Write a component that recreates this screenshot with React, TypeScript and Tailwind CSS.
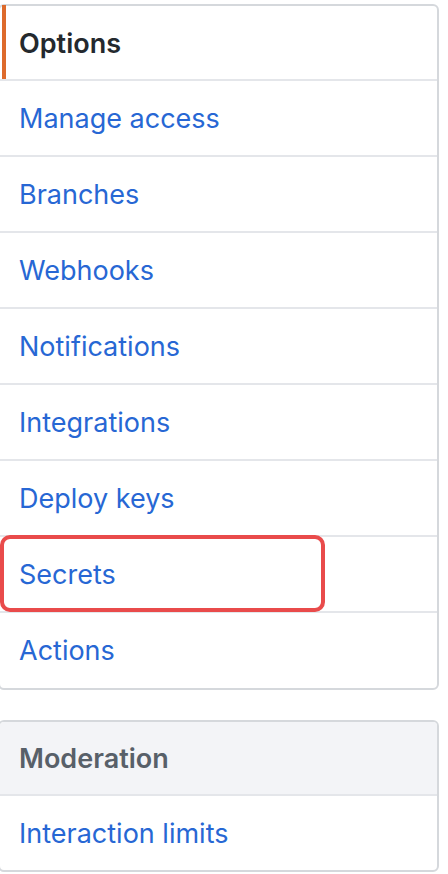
import React from "react";

const items = [
  "Manage access",
  "Branches",
  "Webhooks",
  "Notifications",
  "Integrations",
  "Deploy keys",
  "Secrets",
  "Actions",
];

export default function App() {
  return (
    <div
      className="min-h-[874px] bg-white pt-[4px]"
      style={{ fontFamily: "Inter, 'Liberation Sans', sans-serif" }}
    >
      {/* settings menu */}
      <nav className="relative -ml-[2px] w-[441px] rounded-[6px] border-2 border-[#d5d8dc] bg-white">
        <div className="relative flex h-[75px] items-center border-b-2 border-[#e4e6ea] pl-[19px] pt-[3px] text-[27px] font-semibold text-[#24292e]">
          <span className="absolute -top-[1px] bottom-0 left-[2px] w-[4px] bg-[#dd6a2c]" />
          Options
        </div>
        {items.map((label, i) => (
          <div
            key={label}
            className={`relative flex items-center pl-[19px] pt-[2px] text-[27px] text-[#2767d4] ${
              i < items.length - 1 ? "h-[76px] border-b-2 border-[#e4e6ea]" : "h-[75px]"
            }`}
          >
            {label}
            {label === "Secrets" && (
              <span className="absolute -top-[2px] left-0 h-[77px] w-[325px] rounded-[10px] border-[4px] border-[#e94b4b]" />
            )}
          </div>
        ))}
      </nav>

      <nav className="mt-[30px] -ml-[2px] w-[441px] overflow-hidden rounded-[6px] border-2 border-[#d5d8dc] bg-white">
        <div className="flex h-[74px] items-center border-b-2 border-[#e4e6ea] bg-[#f3f4f7] pl-[19px] pt-[2px] text-[27px] font-semibold text-[#586069]">
          Moderation
        </div>
        <div className="flex h-[74px] items-center pl-[19px] pt-[2px] text-[27px] text-[#2767d4]">
          Interaction limits
        </div>
      </nav>
    </div>
  );
}
